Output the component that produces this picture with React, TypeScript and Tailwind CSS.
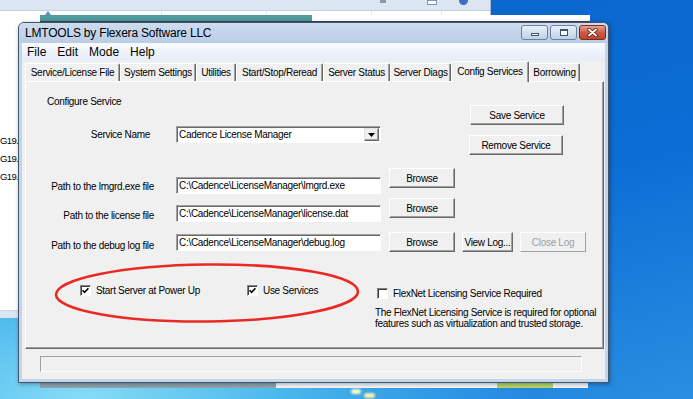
import React from 'react'

const dlg = "font-['Liberation_Sans',Arial,sans-serif] text-[10px] tracking-[-0.3px] text-black"

function Btn({
  children,
  className = '',
  disabled = false,
}: {
  children: React.ReactNode
  className?: string
  disabled?: boolean
}) {
  return (
    <div
      className={`flex h-[20px] shrink-0 items-center justify-center border border-t-white border-l-white border-r-[#696969] border-b-[#696969] bg-[#f0f0f0] shadow-[inset_-1px_-1px_0_#a0a0a0] ${
        disabled ? 'text-[#a0a0a0]' : 'text-black'
      } ${className}`}
    >
      {children}
    </div>
  )
}

function Field({ value, className = '' }: { value: string; className?: string }) {
  return (
    <div
      className={`flex h-[17px] shrink-0 items-center overflow-hidden whitespace-nowrap border border-t-[#a0a0a0] border-l-[#a0a0a0] border-r-white border-b-white bg-white pl-[2px] shadow-[inset_1px_1px_0_#696969] ${className}`}
    >
      {value}
    </div>
  )
}

function Check({ checked }: { checked: boolean }) {
  return (
    <div className="flex h-[11px] w-[11px] shrink-0 items-center justify-center border border-t-[#808080] border-l-[#808080] border-r-white border-b-white bg-white shadow-[inset_1px_1px_0_#404040]">
      {checked && (
        <svg width="7" height="7" viewBox="0 0 7 7">
          <path d="M0.6 3.3 L2.6 5.3 L6.4 1.2" stroke="#000" strokeWidth="1.6" fill="none" />
        </svg>
      )}
    </div>
  )
}

const tabs: { label: string; w: string; active?: boolean }[] = [
  { label: 'Service/License File', w: 'w-[95px]' },
  { label: 'System Settings', w: 'w-[76px]' },
  { label: 'Utilities', w: 'w-[40px]' },
  { label: 'Start/Stop/Reread', w: 'w-[87px]' },
  { label: 'Server Status', w: 'w-[67px]' },
  { label: 'Server Diags', w: 'w-[61px]' },
  { label: 'Config Services', w: 'w-[78px]', active: true },
  { label: 'Borrowing', w: 'w-[51px]' },
]

function CaptionButtons() {
  return (
    <div className="mt-[2px] mr-[2px] ml-auto flex gap-[2px] self-start">
      {/* minimize */}
      <div className="flex h-[15px] w-[27px] items-end justify-center rounded-[3px] border border-[#6e8099] bg-gradient-to-b from-[#e8f0f9] to-[#bfd1e8] pb-[3px]">
        <span className="h-[3px] w-[8px] border border-[#42526a] bg-white" />
      </div>
      {/* maximize */}
      <div className="flex h-[15px] w-[27px] items-center justify-center rounded-[3px] border border-[#6e8099] bg-gradient-to-b from-[#e8f0f9] to-[#bfd1e8]">
        <span className="h-[7px] w-[8px] border border-t-2 border-[#42526a] bg-white" />
      </div>
      {/* close */}
      <div className="flex h-[15px] w-[27px] items-center justify-center rounded-[3px] border border-[#7b2a1e] bg-gradient-to-b from-[#e6a396] via-[#cf5a44] to-[#c2422b]">
        <svg width="11" height="9" viewBox="0 0 11 9">
          <path d="M2 1.5 L9 7.5 M9 1.5 L2 7.5" stroke="#5a1e16" strokeWidth="3.4" strokeLinecap="round" />
          <path d="M2 1.5 L9 7.5 M9 1.5 L2 7.5" stroke="#ffffff" strokeWidth="1.8" strokeLinecap="round" />
        </svg>
      </div>
    </div>
  )
}

function ConfigPanel() {
  return (
    <div className="ml-[3px] mr-[1px] flex h-[268px] flex-col border border-t-white border-l-white border-r-[#696969] border-b-[#696969] shadow-[inset_-1px_-1px_0_#a0a0a0]">
      {/* service section */}
      <div className="flex">
        <div className="flex w-[444px] flex-col">
          <div className="mt-[13px] ml-[21px] leading-[13px]">Configure Service</div>
          <div className="mt-[18px] flex h-[17px] items-center">
            <div className="w-[124px] text-right leading-[13px]">Service Name</div>
            <div className="ml-[26px] flex h-[17px] w-[205px] items-center border border-t-[#a0a0a0] border-l-[#a0a0a0] border-r-white border-b-white bg-white pl-[2px] shadow-[inset_1px_1px_0_#696969]">
              <span className="flex-1 whitespace-nowrap">Cadence License Manager</span>
              <div className="mr-[1px] flex h-[13px] w-[15px] items-center justify-center border border-t-[#e3e3e3] border-l-[#e3e3e3] border-r-[#696969] border-b-[#696969] bg-[#f0f0f0] shadow-[inset_-1px_-1px_0_#a0a0a0]">
                <svg width="7" height="4" viewBox="0 0 7 4">
                  <path d="M0 0 H7 L3.5 4 Z" fill="#000" />
                </svg>
              </div>
            </div>
          </div>
        </div>
        <div className="flex flex-col pt-[23px]">
          <Btn className="w-[94px]">Save Service</Btn>
          <Btn className="mt-[10px] -ml-px w-[94px]">Remove Service</Btn>
        </div>
      </div>

      {/* path rows */}
      <div className="mt-[13px] flex items-start">
        <div className="mt-[12px] w-[128px] text-right leading-[13px]">Path to the lmgrd.exe file</div>
        <Field className="mt-[9px] ml-[22px] w-[205px]" value="C:\Cadence\LicenseManager\lmgrd.exe" />
        <Btn className="ml-[8px] w-[66px]">Browse</Btn>
      </div>
      <div className="mt-[4px] flex items-start">
        <div className="mt-[11px] w-[128px] text-right leading-[13px]">Path to the license file</div>
        <Field className="mt-[7px] ml-[22px] w-[205px]" value="C:\Cadence\LicenseManager\license.dat" />
        <Btn className="ml-[8px] w-[66px]">Browse</Btn>
      </div>
      <div className="mt-[10px] flex items-start">
        <div className="mt-[7px] w-[128px] text-right leading-[13px]">Path to the debug log file</div>
        <Field className="mt-[2px] ml-[22px] w-[205px]" value="C:\Cadence\LicenseManager\debug.log" />
        <Btn className="ml-[8px] w-[66px]">Browse</Btn>
        <Btn className="ml-[7px] w-[51px]">View Log...</Btn>
        <Btn
          className="ml-[7px] w-[66px] border-t-[#f8f8f8] border-l-[#f8f8f8] border-r-[#a0a0a0] border-b-[#a0a0a0] shadow-none"
          disabled
        >
          Close Log
        </Btn>
      </div>

      {/* options */}
      <div className="mt-[32px] flex items-start">
        <div className="ml-[54px] flex h-[13px] w-[167px] items-center gap-[5px]">
          <Check checked />
          <span className="leading-[13px]">Start Server at Power Up</span>
        </div>
        <div className="flex h-[13px] w-[128px] items-center gap-[5px]">
          <Check checked />
          <span className="leading-[13px]">Use Services</span>
        </div>
        <div className="flex flex-col">
          <div className="mt-[3px] ml-[2px] flex h-[13px] items-center gap-[5px]">
            <Check checked={false} />
            <span className="leading-[13px]">FlexNet Licensing Service Required</span>
          </div>
          <div className="mt-[7px] leading-[11px]">
            The FlexNet Licensing Service is required for optional
            <br />
            features such as virtualization and trusted storage.
          </div>
        </div>
      </div>
    </div>
  )
}

function LmtoolsWindow() {
  return (
    <div className="absolute top-[22px] left-[18px] flex h-[361px] w-[591px] flex-col rounded-t-[6px] border border-[#44556b] bg-[#c3d5ea] shadow-[1px_1px_4px_rgba(0,0,0,0.35)]">
      {/* title bar */}
      <div className="flex h-[20px] items-center rounded-t-[5px] bg-gradient-to-b from-[#cddcef] to-[#b9cde6]">
        <span className="pl-[6px] font-['Liberation_Sans',Arial,sans-serif] text-[12px] tracking-[-0.2px] text-black">
          LMTOOLS by Flexera Software LLC
        </span>
        <CaptionButtons />
      </div>

      {/* client area */}
      <div className={`mx-[3px] flex flex-1 flex-col bg-[#f0f0f0] ${dlg}`}>
        {/* menu bar */}
        <div className="flex h-[18px] items-center gap-[11px] bg-gradient-to-b from-[#f9fbfe] to-[#e4ecf6] pl-[5px] text-[12px] tracking-normal">
          <span>File</span>
          <span>Edit</span>
          <span>Mode</span>
          <span>Help</span>
        </div>

        {/* tabs */}
        <div className="flex h-[20px] items-end pl-[3px]">
          {tabs.map((t) =>
            t.active ? (
              <div
                key={t.label}
                className={`relative z-10 -mb-px flex h-[21px] items-start justify-center rounded-t-[2px] border-t border-l border-r border-t-white border-l-white border-r-[#696969] bg-[#f0f0f0] pt-[3px] leading-[13px] shadow-[inset_-1px_0_0_#a0a0a0] ${t.w}`}
              >
                {t.label}
              </div>
            ) : (
              <div
                key={t.label}
                className={`flex h-[18px] items-center justify-center rounded-t-[2px] border-t border-l border-r border-t-white border-l-white border-r-[#696969] leading-[13px] shadow-[inset_-1px_0_0_#a0a0a0] ${t.w}`}
              >
                {t.label}
              </div>
            ),
          )}
        </div>

        <ConfigPanel />

        {/* status bar */}
        <div className="h-[30px]">
          <div className="mt-[7px] ml-[18px] h-[16px] w-[542px] border border-t-[#a0a0a0] border-l-[#a0a0a0] border-r-white border-b-white" />
        </div>
      </div>
      <div className="h-[3px]" />
    </div>
  )
}

function ExplorerBehind() {
  return (
    <div className="absolute top-0 left-0 flex h-[318px] w-[491px] flex-col border-r border-[#a9bad0] bg-white font-['Liberation_Sans',Arial,sans-serif] text-[9.5px] tracking-[-0.6px] text-black">
      <div className="relative h-[11px] border-b border-[#c3d1e3] bg-[#dce6f3]">
        <span className="absolute top-0 left-[380px] h-[3px] w-[6px] bg-[#8a97a8]" />
        <span className="absolute top-0 left-[427px] h-[5px] w-[10px] border border-[#7f93ad] bg-white" />
        <span className="absolute -top-[4px] left-[459px] h-[9px] w-[9px] rounded-full bg-[#3b6fc4]" />
      </div>
      <div className="flex h-[5px]">
        <span className="w-[162px] border-r border-[#e3e6ea]" />
        <span className="w-[105px] border-r border-[#e3e6ea]" />
        <span className="w-[105px] border-r border-[#e3e6ea]" />
        <span className="w-[70px] border-r border-[#e3e6ea]" />
      </div>
      <div className="mt-[116px] flex flex-col leading-[18px]">
        <span>G19.</span>
        <span>G19.</span>
        <span>G19.</span>
      </div>
      <div className="mt-auto h-[8px] border-t border-[#c9d6e6] bg-[#dbe5f1]" />
    </div>
  )
}

export default function App() {
  return (
    <div className="relative h-[399px] w-[693px] overflow-hidden bg-[radial-gradient(ellipse_65%_55%_at_12%_100%,#86dcf6_0%,#4ab7ec_45%,transparent_100%),linear-gradient(165deg,#0a63ca_0%,#0b6dd5_55%,#2a8ee1_100%)]">
      <ExplorerBehind />

      {/* window behind LMTOOLS: edges peeking out */}
      <div className="absolute top-[15px] left-[40px] flex h-[7px] w-[550px] border-b border-[#3a4654]">
        <span className="h-full w-[272px] bg-[#4f9a9c]" />
        <span className="h-full flex-1 bg-white" />
      </div>
      <span className="absolute top-[11px] left-[45px] h-0 w-0 border-x-[3px] border-b-[4px] border-x-transparent border-b-[#6b8db5]" />
      <div className="absolute top-[383px] left-[40px] flex h-[5px] w-[548px]">
        <span className="h-full w-[236px] bg-[#8ea3ad]" />
        <span className="h-full w-[221px] bg-[#f2f6f8]" />
        <span className="h-full w-[56px] bg-[#b4d46a]" />
        <span className="h-full flex-1 bg-[#f2f6f8]" />
      </div>

      {/* windows logo glow */}
      <span className="absolute top-[389px] left-[351px] h-[5px] w-[10px] rounded-full bg-[#fbf7c8] blur-[1px]" />
      <span className="absolute top-[393px] left-[364px] h-[5px] w-[11px] rounded-full bg-[#f6f0b0] blur-[1px]" />

      <LmtoolsWindow />

      {/* red annotation */}
      <svg className="pointer-events-none absolute top-0 left-0" width="693" height="399" viewBox="0 0 693 399">
        <ellipse
          cx="207"
          cy="293"
          rx="151"
          ry="28.5"
          fill="none"
          stroke="#ea2a22"
          strokeWidth="2.6"
          transform="rotate(-0.6 207 293)"
        />
      </svg>
    </div>
  )
}
